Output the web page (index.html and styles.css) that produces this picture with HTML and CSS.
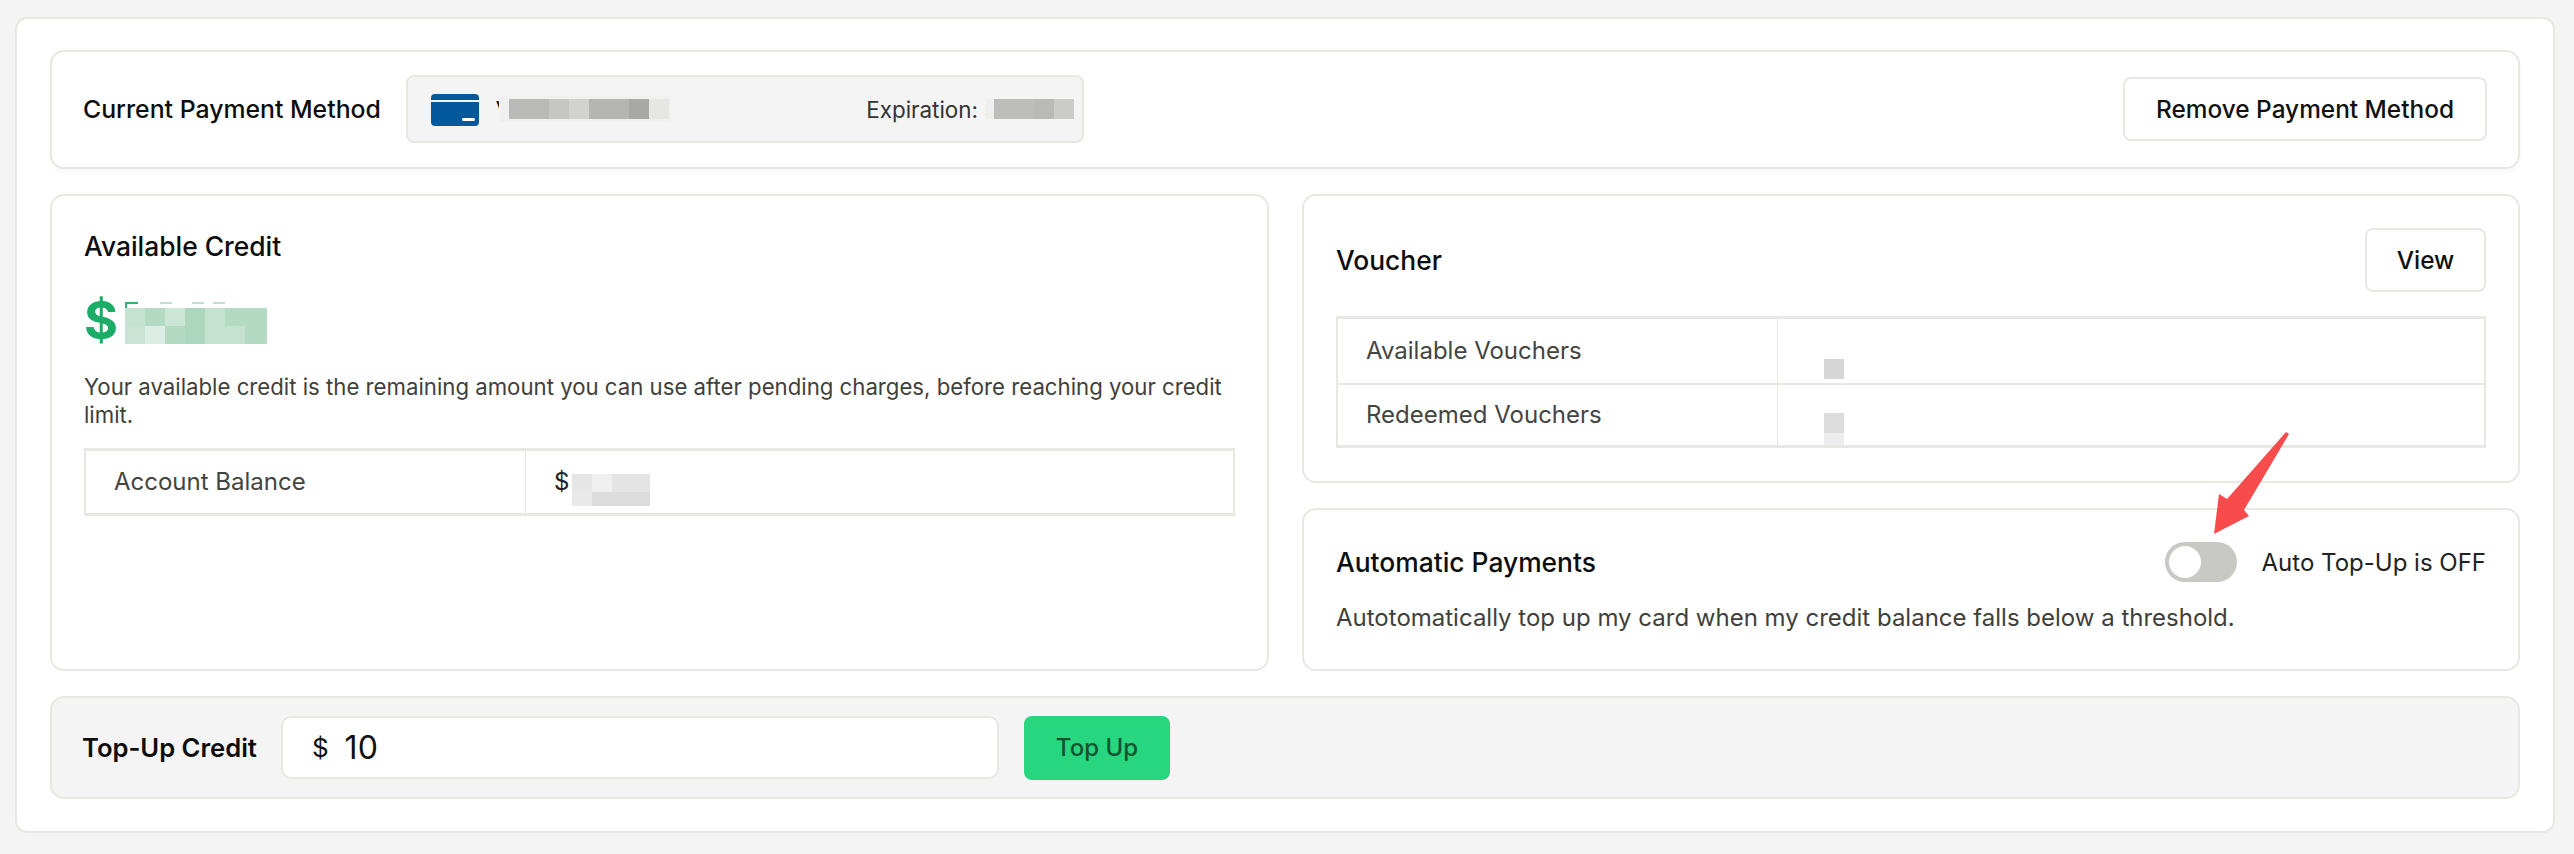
FILE: index.html
```html
<!DOCTYPE html>
<html lang="en">
<head>
<meta charset="utf-8">
<title>Billing</title>
<link rel="stylesheet" href="styles.css">
</head>
<body>
<main class="shell">
  <section class="card method">
    <h2 class="title title-method">Current Payment Method</h2>
    <div class="method-box">
      <svg class="card-icon" width="48" height="32" viewBox="0 0 48 32"><path fill="#03599c" d="M0 4a4 4 0 0 1 4-4h40a4 4 0 0 1 4 4v2H0zM0 8h48v20a4 4 0 0 1-4 4H4a4 4 0 0 1-4-4z"/><rect x="31" y="24" width="13" height="3" rx="1.5" fill="#fff"/></svg>
      <span class="frag-v">V</span>
      <svg class="mosaic m-number" width="172" height="26" viewBox="0 0 172 26"><rect width="172" height="26" fill="#f0f0f0"/><rect x="10" y="3" width="40" height="20" fill="#b9b9b7"/><rect x="50" y="3" width="20" height="20" fill="#c6c6c4"/><rect x="70" y="3" width="20" height="20" fill="#d2d2d0"/><rect x="90" y="3" width="40" height="20" fill="#b5b5b3"/><rect x="130" y="3" width="20" height="20" fill="#a8a8a6"/><rect x="150" y="3" width="20" height="20" fill="#e6e6e4"/></svg>
      <span class="expiry">Expiration: 5</span>
      <svg class="mosaic m-expiry" width="88" height="20" viewBox="0 0 88 20"><rect width="88" height="20" fill="#efefef"/><rect x="8" width="40" height="20" fill="#bdbdbb"/><rect x="48" width="20" height="20" fill="#b9b9b7"/><rect x="68" width="20" height="20" fill="#cbcbc9"/></svg>
    </div>
    <button class="btn btn-remove" type="button">Remove Payment Method</button>
  </section>

  <div class="columns">
    <section class="card credit">
      <h2 class="title">Available Credit</h2>
      <div class="amount">
        <span class="dollar">$</span>
        <svg class="mosaic m-amount" width="142" height="42" viewBox="0 0 142 42"><rect y="0" width="13" height="2" fill="#3aae72"/><rect y="0" width="2" height="6" fill="#3aae72"/><rect x="35" y="0" width="12" height="2" fill="#bfe0cd"/><rect x="67" y="0" width="12" height="2" fill="#bfe0cd"/><rect x="88" y="0" width="12" height="2" fill="#bfe0cd"/><g transform="translate(0 6)"><rect width="20" height="18" fill="#c5e2d1"/><rect x="20" width="20" height="18" fill="#b5dac4"/><rect x="40" width="20" height="18" fill="#cbe5d6"/><rect x="60" width="20" height="18" fill="#acd6bd"/><rect x="80" width="20" height="18" fill="#c5e2d1"/><rect x="100" width="42" height="18" fill="#b5dac4"/><rect y="18" width="20" height="18" fill="#c9e4d4"/><rect x="20" y="18" width="20" height="18" fill="#dceee3"/><rect x="40" y="18" width="20" height="18" fill="#b5dac4"/><rect x="60" y="18" width="20" height="18" fill="#acd6bd"/><rect x="80" y="18" width="40" height="18" fill="#c5e2d1"/><rect x="120" y="18" width="22" height="18" fill="#b5dac4"/></g></svg>
      </div>
      <p class="copy credit-copy">Your available credit is the remaining amount you can use after pending charges, before reaching your credit limit.</p>
      <div class="table">
        <div class="row">
          <div class="cell label">Account Balance</div>
          <div class="cell value">
            <span>$</span>
            <svg class="mosaic m-balance" width="78" height="32" viewBox="0 0 78 32"><rect width="20" height="18" fill="#e6e6e6"/><rect x="20" width="20" height="18" fill="#efefef"/><rect x="40" width="38" height="18" fill="#e4e4e4"/><rect y="18" width="20" height="14" fill="#e9e9e9"/><rect x="20" y="18" width="58" height="14" fill="#dcdcdc"/></svg>
          </div>
        </div>
      </div>
    </section>

    <div class="stack">
      <section class="card voucher">
        <div class="voucher-head">
          <h2 class="title">Voucher</h2>
          <button class="btn btn-view" type="button">View</button>
        </div>
        <div class="table">
          <div class="row row-v">
            <div class="cell label">Available Vouchers</div>
            <div class="cell value value-v"><svg class="mosaic" width="20" height="20" viewBox="0 0 20 20"><rect width="20" height="20" fill="#d6d6d6"/></svg></div>
          </div>
          <div class="row row-v">
            <div class="cell label">Redeemed Vouchers</div>
            <div class="cell value value-v"><svg class="mosaic" width="20" height="32" viewBox="0 0 20 32"><rect width="20" height="20" fill="#dcdcdc"/><rect y="20" width="20" height="12" fill="#ececec"/></svg></div>
          </div>
        </div>
      </section>

      <section class="card auto">
        <div class="auto-head">
          <h2 class="title">Automatic Payments</h2>
          <div class="auto-state">
            <span class="toggle"><span class="knob"></span></span>
            <span class="state-text">Auto Top-Up is OFF</span>
          </div>
        </div>
        <p class="copy auto-copy">Autotomatically top up my card when my credit balance falls below a threshold.</p>
      </section>
    </div>
  </div>

  <section class="topup">
    <h2 class="title topup-title">Top-Up Credit</h2>
    <div class="amount-input"><span>$</span><span>10</span></div>
    <button class="btn-topup" type="button">Top Up</button>
  </section>
</main>
<svg class="arrow" width="90" height="110" viewBox="0 0 90 110"><polygon fill="#f84c4c" points="73,1 76,3 31,79 36,85 1,103 6,63 14,68"/></svg>
</body>
</html>
```
FILE: styles.css
```css
* { box-sizing: border-box; }
html, body { margin: 0; padding: 0; }
body {
  width: 2574px;
  height: 854px;
  overflow: hidden;
  background: #f4f4f4;
  font-family: Inter, "Liberation Sans", sans-serif;
  color: #111;
  position: relative;
}
.shell {
  width: 2540px;
  height: 816px;
  margin: 17px 0 0 15px;
  padding: 31px 33px 32px;
  background: #fff;
  border: 2px solid #e8e8e3;
  border-radius: 12px;
  display: flex;
  flex-direction: column;
  gap: 25px;
}
.card {
  background: #fff;
  border: 2px solid #e8e8e3;
  border-radius: 14px;
}
.title {
  margin: 0;
  font-size: 26.4px;
  font-weight: 500;
  line-height: 32px;
  color: #0d0d0d;
  white-space: nowrap;
}
.title-method { font-size: 24.8px; }
.copy {
  margin: 0;
  font-size: 24px;
  line-height: 28px;
  color: #3f3f3c;
}
.method {
  height: 119px;
  flex: none;
  display: flex;
  align-items: center;
  padding: 0 31px 1px;
  box-shadow: 0 3px 5px rgba(0,0,0,.03);
}
.method-box {
  width: 678px;
  height: 68px;
  margin-left: 25px;
  margin-right: auto;
  padding: 0 8px 0 23px;
  background: #f4f4f4;
  border: 2px solid #e8e8e3;
  border-radius: 8px;
  display: flex;
  align-items: center;
  font-size: 22px;
  color: #333;
}
.card-icon { flex: none; margin-top: 2px; }
.frag-v { margin-left: 17px; color: #111; }
.mosaic { flex: none; display: block; filter: blur(.6px); }
.m-number { margin-left: -12px; }
.expiry { margin-left: auto; white-space: nowrap; color: #333; font-size: 22.4px; }
.m-expiry { margin-left: -12px; }
.btn {
  background: #fff;
  border: 2px solid #e8e8e3;
  border-radius: 8px;
  font: 500 24.4px/1 Inter, "Liberation Sans", sans-serif;
  color: #111;
  padding: 0;
}
.btn-remove { width: 364px; height: 64px; }
.btn-view { width: 121px; height: 64px; }
.columns {
  flex: none;
  height: 477px;
  display: grid;
  grid-template-columns: 1219px 1218px;
  gap: 33px;
}
.credit { padding: 34px 32px 0; }
.amount {
  display: flex;
  align-items: center;
  height: 50px;
  margin-top: 34px;
}
.dollar {
  color: #1bad68;
  font-size: 52px;
  line-height: 50px;
  font-weight: 700;
  width: 41px;
}
.m-amount { margin-top: 4px; }
.credit-copy { margin-top: 27px; font-size: 22.2px; }
.table { border: 2px solid #e8e8e3; border-top-width: 3px; border-bottom-width: 3px; }
.credit .table { margin-top: 19px; }
.row { display: flex; height: 62px; }
.row-v { height: 64px; }
.row-v + .row-v { height: 62px; border-top: 2px solid #e8e8e3; }
.cell { display: flex; align-items: center; font-size: 24px; line-height: 32px; }
.label { width: 440px; padding-left: 28px; color: #444441; border-right: 1px solid #e8e8e3; }
.value { flex: 1; padding-left: 28px; color: #222; }
.value .m-balance { margin-left: 3px; margin-top: 16px; }
.value-v { padding-left: 46px; align-items: flex-end; padding-bottom: 4px; }
.row-v + .row-v .value-v { padding-bottom: 0; }
.stack { display: flex; flex-direction: column; gap: 25px; }
.voucher { height: 289px; flex: none; padding: 32px 32px 0; }
.voucher-head { display: flex; justify-content: space-between; align-items: center; margin-bottom: 24px; }
.auto { flex: 1; padding: 0 32px; }
.auto-head { display: flex; justify-content: space-between; align-items: center; height: 40px; margin-top: 32px; }
.auto-state { display: flex; align-items: center; gap: 25px; }
.toggle {
  display: block;
  width: 72px;
  height: 40px;
  border-radius: 20px;
  background: #c8c8c4;
  padding: 4px;
}
.knob { display: block; width: 32px; height: 32px; border-radius: 50%; background: #fff; }
.state-text { font-size: 24px; color: #222; white-space: nowrap; }
.auto-copy { margin-top: 22px; }
.topup {
  flex: none;
  height: 103px;
  background: #f4f4f4;
  border: 2px solid #e8e8e3;
  border-radius: 14px;
  display: flex;
  align-items: center;
  padding: 0 30px;
}
.topup-title { font-weight: 600; font-size: 25.6px; }
.amount-input {
  width: 718px;
  height: 63px;
  margin-left: 24px;
  background: #fff;
  border: 2px solid #e8e8e3;
  border-radius: 10px;
  display: flex;
  align-items: center;
  gap: 16px;
  padding-left: 29px;
  font-size: 32px;
  color: #111;
}
.amount-input span:first-child { font-size: 26px; }
.btn-topup {
  width: 146px;
  height: 64px;
  margin-left: 25px;
  border: 0;
  border-radius: 8px;
  background: #27d67f;
  color: #14532f;
  font: 500 24px/1 Inter, "Liberation Sans", sans-serif;
  padding: 0;
}
.arrow { position: absolute; left: 2213px; top: 431px; }
```
